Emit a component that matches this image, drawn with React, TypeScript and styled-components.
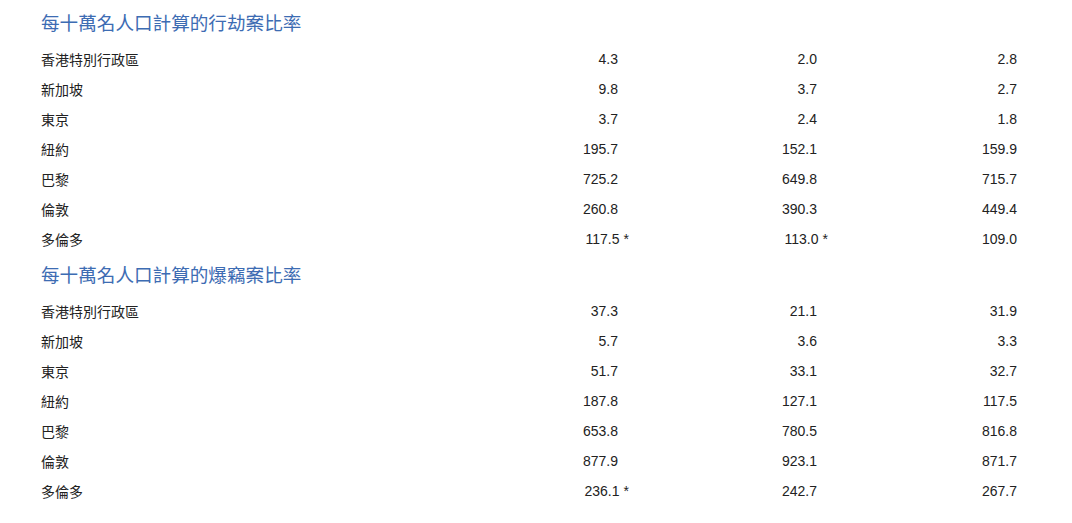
import React from "react";
import styled, { createGlobalStyle } from "styled-components";

const GlobalStyle = createGlobalStyle`
  html, body {
    margin: 0;
    padding: 0;
    background: #ffffff;
  }
  body {
    font-family: "Liberation Sans", "Noto Sans CJK TC", sans-serif;
    color: #222222;
  }
`;

const Page = styled.main`
  padding: 2px 0 0 41px;
  width: 976px;
`;

const Section = styled.section`
  display: flex;
  flex-direction: column;
`;

const Title = styled.h2`
  margin: 0;
  padding: 6px 0 8px;
  font-size: 18.6px;
  line-height: 28px;
  font-weight: 400;
  color: #3d6cb3;
  font-family: "Noto Sans CJK TC", sans-serif;
`;

const Table = styled.div`
  display: grid;
  grid-template-columns: 377px 200px 199px 200px;
`;

const Row = styled.div`
  display: contents;
`;

const Label = styled.div`
  height: 30px;
  line-height: 30px;
  font-size: 14px;
  font-family: "Noto Sans CJK TC", sans-serif;
  color: #222222;
`;

const Value = styled.div`
  height: 30px;
  line-height: 31px;
  font-size: 14px;
  text-align: right;
  color: #222222;
  white-space: nowrap;
`;

const Mark = styled.span`
  margin-right: -11px;
  padding-left: 4px;
`;

type Cell = { v: string; note?: boolean };
type DataRow = { city: string; values: Cell[] };

const c = (v: string, note = false): Cell => ({ v, note });

const robbery: DataRow[] = [
  { city: "香港特別行政區", values: [c("4.3"), c("2.0"), c("2.8")] },
  { city: "新加坡", values: [c("9.8"), c("3.7"), c("2.7")] },
  { city: "東京", values: [c("3.7"), c("2.4"), c("1.8")] },
  { city: "紐約", values: [c("195.7"), c("152.1"), c("159.9")] },
  { city: "巴黎", values: [c("725.2"), c("649.8"), c("715.7")] },
  { city: "倫敦", values: [c("260.8"), c("390.3"), c("449.4")] },
  { city: "多倫多", values: [c("117.5", true), c("113.0", true), c("109.0")] },
];

const burglary: DataRow[] = [
  { city: "香港特別行政區", values: [c("37.3"), c("21.1"), c("31.9")] },
  { city: "新加坡", values: [c("5.7"), c("3.6"), c("3.3")] },
  { city: "東京", values: [c("51.7"), c("33.1"), c("32.7")] },
  { city: "紐約", values: [c("187.8"), c("127.1"), c("117.5")] },
  { city: "巴黎", values: [c("653.8"), c("780.5"), c("816.8")] },
  { city: "倫敦", values: [c("877.9"), c("923.1"), c("871.7")] },
  { city: "多倫多", values: [c("236.1", true), c("242.7"), c("267.7")] },
];

const RateTable = ({ title, rows }: { title: string; rows: DataRow[] }) => (
  <Section>
    <Title>{title}</Title>
    <Table>
      {rows.map((r) => (
        <Row key={r.city}>
          <Label>{r.city}</Label>
          {r.values.map((cell, i) => (
            <Value key={i}>
              {cell.v}
              {cell.note && <Mark>*</Mark>}
            </Value>
          ))}
        </Row>
      ))}
    </Table>
  </Section>
);

export default function App() {
  return (
    <>
      <GlobalStyle />
      <Page>
        <RateTable title="每十萬名人口計算的行劫案比率" rows={robbery} />
        <RateTable title="每十萬名人口計算的爆竊案比率" rows={burglary} />
      </Page>
    </>
  );
}
